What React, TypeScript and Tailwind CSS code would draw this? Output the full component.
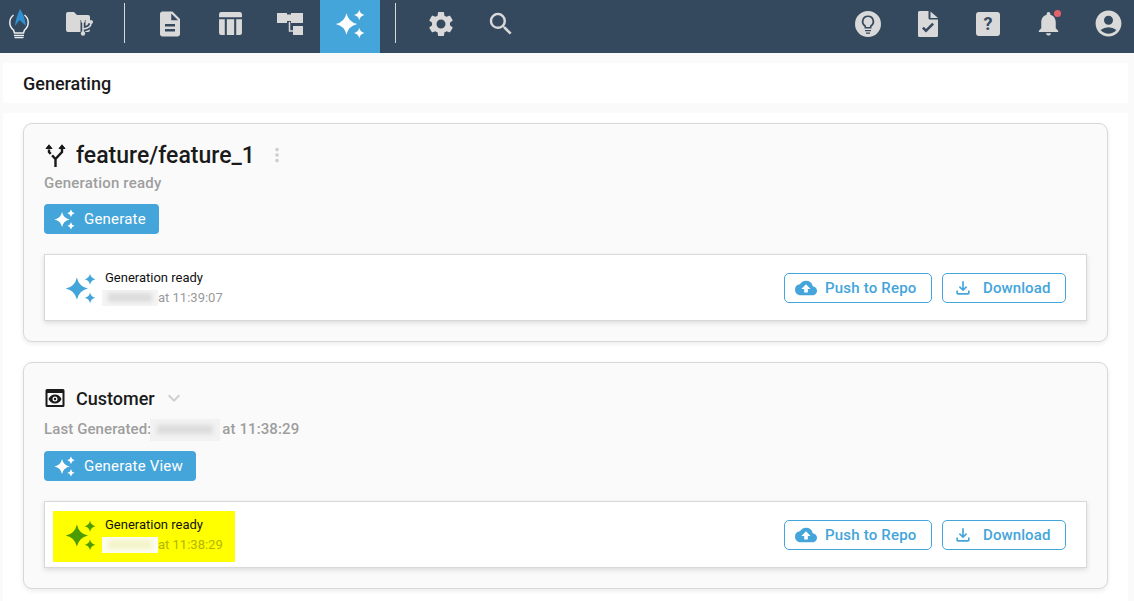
import React from 'react';
import { MdDescription, MdSettings, MdSearch, MdNotifications, MdAccountCircle, MdOutlineFileDownload, MdCloudUpload, MdKeyboardArrowDown, MdMoreVert } from 'react-icons/md';

const font = { fontFamily: 'Roboto, "Liberation Sans", sans-serif' };

function star(cx: number, cy: number, r: number) {
  const c = r * 0.18;
  return `M${cx} ${cy - r} Q${cx + c} ${cy - c} ${cx + r} ${cy} Q${cx + c} ${cy + c} ${cx} ${cy + r} Q${cx - c} ${cy + c} ${cx - r} ${cy} Q${cx - c} ${cy - c} ${cx} ${cy - r} Z`;
}

function Sparkles({ className }: { className?: string }) {
  return (
    <svg viewBox="0 0 24 24" className={className} fill="currentColor">
      <path d={star(9.2, 12, 8.6)} />
      <path d={star(19.4, 4.8, 4.2)} />
      <path d={star(19.4, 19.2, 4.2)} />
    </svg>
  );
}

function Blur({ className, inner }: { className?: string; inner: string }) {
  return (
    <span className={`inline-flex items-center justify-center overflow-hidden ${className}`}>
      <span className={`block h-[9px] w-[80%] blur-[2px] ${inner}`} />
    </span>
  );
}

function NavItem({ children, active, className }: { children: React.ReactNode; active?: boolean; className?: string }) {
  return (
    <div className={`h-[53px] pb-[6px] flex items-center justify-center text-[#d9d9d9] ${active ? 'bg-[#44a5da] text-white' : ''} ${className ?? 'w-[60px]'}`}>
      {children}
    </div>
  );
}

function ResultRow({ time, highlight }: { time: string; highlight?: boolean }) {
  return (
    <div className="mt-[20px] h-[67px] bg-white border border-[#d8d8d8] shadow-[0_2px_5px_rgba(0,0,0,0.12)] flex justify-between pl-[8px] pr-[20px]">
      <div className={`mt-[9px] h-[51px] w-[182px] flex items-center pl-[12px] ${highlight ? 'bg-[#ffff00]' : ''}`}>
        <Sparkles className={`-mt-[3px] w-[31px] h-[31px] ${highlight ? 'text-[#4c9c00]' : 'text-[#44a5da]'}`} />
        <div className="ml-[9px] -mt-[2px]">
          <div className="text-[13px] leading-[16px] text-[#111]">Generation ready</div>
          <div className={`text-[13px] leading-[20px] mt-[2px] flex items-center ${highlight ? 'text-[#b5b500]' : 'text-[#9a9a9a]'}`}>
            <Blur
              className={`w-[56px] h-[16px] -ml-[3px] ${highlight ? 'bg-[#fdfdf0]' : 'bg-[#f4f4f4]'}`}
              inner={highlight ? 'bg-[#f3f3c8]' : 'bg-[#dcdcdc]'}
            />
            <span>at {time}</span>
          </div>
        </div>
      </div>
      <div className="flex items-center gap-[10px]">
        <button className="h-[30px] w-[148px] border border-[#44a5da] rounded-[5px] flex items-center pl-[10px] text-[#44a5da] text-[15px] font-medium tracking-[0.2px]">
          <MdCloudUpload className="w-[22px] h-[22px]" />
          <span className="ml-[8px] pt-[1px]">Push to Repo</span>
        </button>
        <button className="h-[30px] w-[124px] border border-[#44a5da] rounded-[5px] flex items-center pl-[10px] text-[#44a5da] text-[15px] font-medium tracking-[0.1px]">
          <MdOutlineFileDownload className="w-[20px] h-[20px]" />
          <span className="ml-[10px] pt-[1px]">Download</span>
        </button>
      </div>
    </div>
  );
}

export default function App() {
  return (
    <div className="w-[1134px] h-[601px] overflow-hidden bg-[#fafafa]" style={font}>
      <nav className="h-[53px] bg-[#34495e] flex items-center">
        <NavItem className="w-[37px]">
          <svg viewBox="0 0 20 30" className="w-[20px] h-[30px]" fill="none">
            <path d="M4.5 6 A9.5 9.5 0 0 0 4.5 21 L5.5 24 H14.5 L15.5 21 A9.5 9.5 0 0 0 15.5 6" stroke="#efefef" strokeWidth="1.5" />
            <path d="M5 26.5 H15 M5.5 28.7 H14.5" stroke="#efefef" strokeWidth="1.3" />
            <path d="M11 0 C8.5 5 6.5 11 6 17 L10.5 11 L17 17 C16.5 11 14 4 11 0 Z" fill="#2f8fd0" />
          </svg>
        </NavItem>
        <NavItem className="w-[60px] ml-[13px]">
          <svg viewBox="0 0 28 24" className="w-[28px] h-[24px]" fill="none">
            <path d="M0 2 Q0 0 2 0 H8 L11 3 H22 Q24 3 24 5 V18 Q24 20 22 20 H2 Q0 20 0 18 Z" fill="currentColor" />
            <path d="M17 8 V21 M25 11 Q25 16 17 17" stroke="#34495e" strokeWidth="5" />
            <path d="M17 9 V21 M25 11 Q25 16 17 17" stroke="currentColor" strokeWidth="1.6" />
            <circle cx="17" cy="9" r="2" fill="currentColor" />
            <circle cx="25" cy="10" r="2" fill="currentColor" />
            <circle cx="17" cy="21.5" r="2.2" fill="currentColor" />
          </svg>
        </NavItem>
        <div className="w-px h-[40px] bg-[#d9d9d9] ml-[14px] mr-[15px] mb-[7px]" />
        <NavItem><MdDescription className="w-[30px] h-[30px]" /></NavItem>
        <NavItem>
          <svg viewBox="0 0 24 24" className="w-[25px] h-[25px]" fill="currentColor">
            <path d="M1 3 Q1 1 3 1 H21 Q23 1 23 3 V6 H1 Z" />
            <path d="M1 8 H6.5 V23 H3 Q1 23 1 21 Z M8.5 8 H15.5 V23 H8.5 Z M17.5 8 H23 V21 Q23 23 21 23 H17.5 Z" />
          </svg>
        </NavItem>
        <NavItem>
          <svg viewBox="0 0 26 22" className="w-[26px] h-[22px]" fill="currentColor">
            <path d="M0 0 H10 V10 H0 Z M14 0 H26 V10 H14 Z M16 13 H26 V22 H16 Z M10 1.5 H14 V8 H10 Z" />
            <path d="M12.5 9 V18 H16" fill="none" stroke="currentColor" strokeWidth="1.5" />
          </svg>
        </NavItem>
        <NavItem active><Sparkles className="w-[30px] h-[30px]" /></NavItem>
        <div className="w-px h-[40px] bg-[#d9d9d9] ml-[15px] mr-[15px] mb-[7px]" />
        <NavItem><MdSettings className="w-[30px] h-[30px]" /></NavItem>
        <NavItem><MdSearch className="w-[30px] h-[30px]" /></NavItem>
        <div className="ml-auto flex">
          <NavItem>
            <svg viewBox="0 0 26 26" className="w-[26px] h-[26px]" fill="currentColor">
              <path fillRule="evenodd" d="M13 0 A13 13 0 1 1 13 26 A13 13 0 1 1 13 0 Z M13 4.5 A6 6 0 0 0 9.5 15.5 V17.5 H16.5 V15.5 A6 6 0 0 0 13 4.5 Z M13 6 A4.5 4.5 0 0 1 15 14.5 V16 H11 V14.5 A4.5 4.5 0 0 1 13 6 Z M10 19 V20.3 H16 V19 Z M11 21.5 V22.7 H15 V21.5 Z" />
            </svg>
          </NavItem>
          <NavItem>
            <svg viewBox="0 0 20 26" className="w-[20px] h-[26px]" fill="currentColor">
              <path fillRule="evenodd" d="M1.5 0 H10.5 V7 Q10.5 8.5 12 8.5 H20 V24.5 Q20 26 18.5 26 H1.5 Q0 26 0 24.5 V1.5 Q0 0 1.5 0 Z M4 17.5 L8 21.5 L16 13.5 L14.2 11.7 L8 18 L5.8 15.7 Z" />
              <path d="M12.5 0.5 L20 7 H12.5 Z" />
            </svg>
          </NavItem>
          <NavItem>
            <div className="w-[24px] h-[24px] rounded-[3px] bg-[#d9d9d9] text-[#34495e] text-[18px] font-bold leading-[24px] text-center">?</div>
          </NavItem>
          <NavItem>
            <div className="relative">
              <MdNotifications className="w-[29px] h-[29px]" />
              <span className="absolute top-[1px] right-[2px] w-[7px] h-[7px] rounded-full bg-[#e2636b]" />
            </div>
          </NavItem>
          <NavItem className="w-[52px] ml-[4px]"><MdAccountCircle className="w-[31px] h-[31px]" /></NavItem>
        </div>
      </nav>

      <div className="mt-[10px] ml-[3px] w-[1125px] h-[40px] bg-white pl-[20px] flex items-center text-[18px] font-medium text-[#1a1a1a]">
        Generating
      </div>

      <main className="mt-[10px] ml-[3px] w-[1125px] bg-white pt-[10px] px-[20px] h-[490px]">
        <section className="h-[219px] bg-[#fafafa] border border-[#d8d8d8] rounded-[9px] shadow-[0_2px_5px_rgba(0,0,0,0.08)] px-[20px] pt-[15px]">
          <div className="flex items-center h-[32px] text-[#1a1a1a]">
            <svg viewBox="0 0 21 23" className="w-[21px] h-[23px] ml-[1px]" fill="none" stroke="currentColor" strokeWidth="2.4">
              <path d="M10.5 23 V15 L17 8 V3" />
              <path d="M10.5 15 L4 8 V5" strokeDasharray="5 2" />
              <path d="M14 4.5 L17 0.8 L20 4.5 Z M1 4.5 L4 0.8 L7 4.5 Z" fill="currentColor" strokeWidth="1" />
            </svg>
            <span className="ml-[10px] pt-[2px] text-[23px] font-medium">feature/feature_1</span>
            <MdMoreVert className="w-[22px] h-[22px] ml-[11px] text-[#cfcfcf]" />
          </div>
          <div className="mt-[3px] text-[15px] leading-[18px] font-medium text-[#9e9e9e] tracking-[0.2px]">Generation ready</div>
          <button className="mt-[12px] h-[30px] w-[115px] bg-[#44a5da] rounded-[4px] text-white text-[15px] flex items-center pl-[10px] tracking-[0.2px]">
            <Sparkles className="w-[21px] h-[21px]" />
            <span className="ml-[9px]">Generate</span>
          </button>
          <ResultRow time="11:39:07" />
        </section>

        <section className="mt-[20px] h-[227px] bg-[#fafafa] border border-[#d8d8d8] rounded-[9px] shadow-[0_2px_5px_rgba(0,0,0,0.08)] px-[20px] pt-[20px]">
          <div className="flex items-center h-[30px] text-[#1a1a1a]">
            <svg viewBox="0 0 20 20" className="w-[20px] h-[20px] ml-[1px]" fill="currentColor">
              <path fillRule="evenodd" d="M2 1 H18 Q19.5 1 19.5 2.5 V17.5 Q19.5 19 18 19 H2 Q0.5 19 0.5 17.5 V2.5 Q0.5 1 2 1 Z M2.5 5 V17 H17.5 V5 Z" />
              <path fillRule="evenodd" d="M10 6.5 C13 6.5 15.5 8.5 16.5 11 C15.5 13.5 13 15.5 10 15.5 C7 15.5 4.5 13.5 3.5 11 C4.5 8.5 7 6.5 10 6.5 Z M10 8.5 A2.5 2.5 0 1 0 10 13.5 A2.5 2.5 0 1 0 10 8.5 Z" />
              <circle cx="10" cy="11" r="1.2" />
            </svg>
            <span className="ml-[11px] text-[18px] font-medium">Customer</span>
            <MdKeyboardArrowDown className="w-[24px] h-[24px] ml-[7px] text-[#cfcfcf]" />
          </div>
          <div className="mt-[5px] h-[23px] text-[15px] leading-[23px] font-medium text-[#9e9e9e] tracking-[0.1px] flex items-center">
            <span>Last Generated:</span>
            <Blur className="w-[70px] h-[22px] bg-[#f2f2f2] -ml-[1px] mr-[2px]" inner="bg-[#dcdcdc]" />
            <span>at 11:38:29</span>
          </div>
          <button className="mt-[10px] h-[30px] w-[152px] bg-[#44a5da] rounded-[4px] text-white text-[15px] flex items-center pl-[10px] tracking-[0.2px]">
            <Sparkles className="w-[21px] h-[21px]" />
            <span className="ml-[9px]">Generate View</span>
          </button>
          <ResultRow time="11:38:29" highlight />
        </section>
      </main>
    </div>
  );
}
